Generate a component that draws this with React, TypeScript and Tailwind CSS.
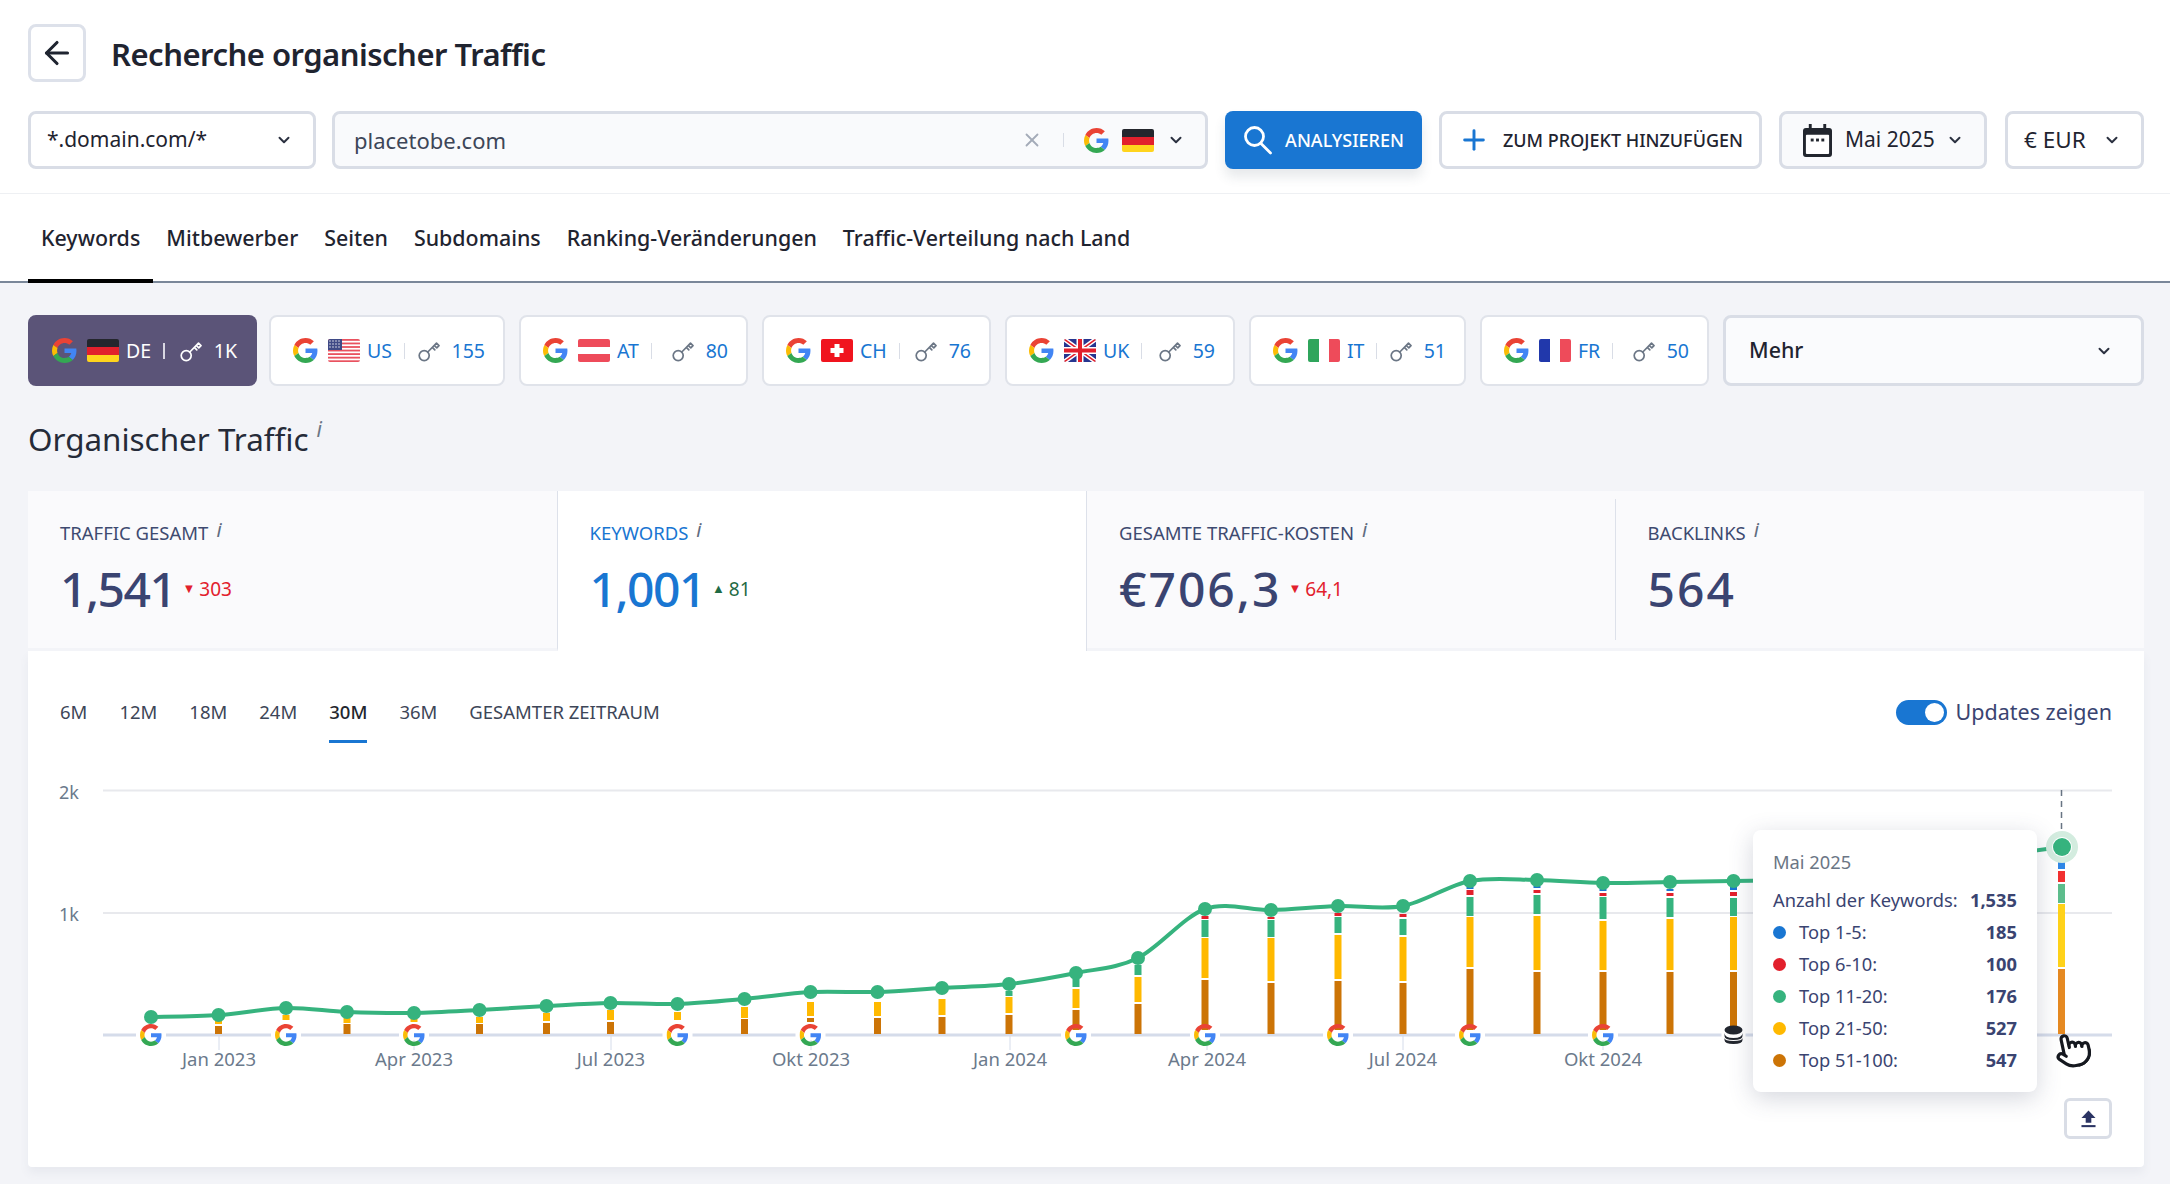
import React from "react";
import { ArrowLeft, ChevronDown, Plus, X, Pointer } from "lucide-react";

const GPaths = () => (
  <>
    <path fill="#EA4335" d="M24 9.5c3.54 0 6.71 1.22 9.21 3.6l6.85-6.85C35.9 2.38 30.47 0 24 0 14.62 0 6.51 5.38 2.56 13.22l7.98 6.19C12.43 13.72 17.74 9.5 24 9.5z" />
    <path fill="#4285F4" d="M46.98 24.55c0-1.57-.15-3.09-.38-4.55H24v9.02h12.94c-.58 2.96-2.26 5.48-4.78 7.18l7.73 6c4.51-4.18 7.09-10.36 7.09-17.65z" />
    <path fill="#FBBC05" d="M10.53 28.59c-.48-1.45-.76-2.99-.76-4.59s.27-3.14.76-4.59l-7.98-6.19C.92 16.46 0 20.12 0 24c0 3.88.92 7.54 2.56 10.78l7.97-6.19z" />
    <path fill="#34A853" d="M24 48c6.48 0 11.93-2.13 15.89-5.81l-7.73-6c-2.15 1.45-4.92 2.3-8.16 2.3-6.26 0-11.57-4.22-13.47-9.91l-7.98 6.19C6.51 42.62 14.62 48 24 48z" />
  </>
);

const G = ({ className = "w-[25px] h-[25px]" }: { className?: string }) => (
  <svg viewBox="0 0 48 48" className={className + " shrink-0"}>
    <GPaths />
  </svg>
);

const Flag = ({ code }: { code: string }) => {
  const body: Record<string, React.ReactNode> = {
    DE: (
      <>
        <rect width="32" height="8" fill="#24262d" />
        <rect y="8" width="32" height="8" fill="#e2202c" />
        <rect y="16" width="32" height="7" fill="#ffd41d" />
      </>
    ),
    US: (
      <>
        <rect width="32" height="23" fill="#fff" />
        {[0, 1, 2, 3, 4, 5, 6].map((i) => (
          <rect key={i} y={i * 3.55} width="32" height="1.8" fill="#e9525f" />
        ))}
        <rect width="14" height="11" fill="#3f4a86" />
        {[2, 5, 8].map((y) =>
          [2, 5, 8, 11].map((x) => <circle key={x + "-" + y} cx={x} cy={y} r="0.7" fill="#fff" />)
        )}
      </>
    ),
    AT: (
      <>
        <rect width="32" height="23" fill="#fff" />
        <rect width="32" height="8" fill="#ee4b5a" />
        <rect y="15" width="32" height="8" fill="#ee4b5a" />
      </>
    ),
    CH: (
      <>
        <rect width="32" height="23" fill="#f0141e" />
        <rect x="13.5" y="5" width="5" height="13" fill="#fff" />
        <rect x="9.5" y="9" width="13" height="5" fill="#fff" />
      </>
    ),
    UK: (
      <>
        <rect width="32" height="23" fill="#27358f" />
        <path d="M0 0L32 23M32 0L0 23" stroke="#fff" strokeWidth="4.5" />
        <path d="M0 0L32 23M32 0L0 23" stroke="#e2202c" strokeWidth="1.5" />
        <path d="M16 0V23M0 11.5H32" stroke="#fff" strokeWidth="7" />
        <path d="M16 0V23M0 11.5H32" stroke="#e2202c" strokeWidth="4" />
      </>
    ),
    IT: (
      <>
        <rect width="11" height="23" fill="#2fa55c" />
        <rect x="11" width="10" height="23" fill="#fff" />
        <rect x="21" width="11" height="23" fill="#ee4b5a" />
      </>
    ),
    FR: (
      <>
        <rect width="11" height="23" fill="#2138ab" />
        <rect x="11" width="10" height="23" fill="#fff" />
        <rect x="21" width="11" height="23" fill="#ee4b5a" />
      </>
    ),
  };
  return (
    <svg viewBox="0 0 32 23" className="w-[32px] h-[23px] shrink-0 rounded-[2px]">
      {body[code]}
    </svg>
  );
};

const KeyIcon = ({ color }: { color: string }) => (
  <svg viewBox="0 0 22 22" className="w-[22px] h-[22px] shrink-0" fill="none" stroke={color} strokeWidth="1.7" strokeLinecap="round" strokeLinejoin="round">
    <circle cx="6.2" cy="15.6" r="5" />
    <path d="M9.8 12L18.5 3.2L21 5.6L18.8 7.8L17 6.2M14.4 7.4L16.8 9.8" />
  </svg>
);

const chips = [
  { code: "US", n: "155", w: "w-[236px]" },
  { code: "AT", n: "80", w: "w-[229px]" },
  { code: "CH", n: "76", w: "w-[229px]" },
  { code: "UK", n: "59", w: "w-[230px]" },
  { code: "IT", n: "51", w: "w-[217px]" },
  { code: "FR", n: "50", w: "w-[229px]" },
];

const Chev = ({ className = "" }: { className?: string }) => (
  <ChevronDown size={18} strokeWidth={2.6} className={"text-[#2b3140] shrink-0 " + className} />
);

const stats = [
  { label: "TRAFFIC GESAMT", value: "1,541", delta: "303", dir: "down", track: "tracking-[-1.5px]" },
  { label: "KEYWORDS", value: "1,001", delta: "81", dir: "up", active: true, track: "tracking-[-1.5px]" },
  { label: "GESAMTE TRAFFIC-KOSTEN", value: "€706,3", delta: "64,1", dir: "down", track: "tracking-[2px]" },
  { label: "BACKLINKS", value: "564", track: "tracking-[2px]" },
];

const O = "#cc7406", Y = "#ffb900", GR = "#36b37e", R = "#e2202c", B = "#1976d2";
type Seg = [string, number, number];
const o = (t: number, b = 1034): Seg => [O, t, b];
const y = (t: number, b: number): Seg => [Y, t, b];
const g = (t: number, b: number): Seg => [GR, t, b];
const r = (t: number, b: number): Seg => [R, t, b];
const bl = (t: number, b: number): Seg => [B, t, b];

const pts: { x: number; y: number; segs: Seg[]; mark?: string }[] = [
  { x: 151, y: 1017, segs: [], mark: "g" },
  { x: 218.5, y: 1015, segs: [o(1026), y(1021, 1024)] },
  { x: 286, y: 1008, segs: [y(1015, 1020)], mark: "g" },
  { x: 347, y: 1012, segs: [o(1024), y(1018, 1023)] },
  { x: 414, y: 1013, segs: [y(1019, 1022)], mark: "g" },
  { x: 479.5, y: 1010, segs: [o(1024), y(1017, 1023)] },
  { x: 546.5, y: 1006, segs: [o(1023), y(1013, 1021)] },
  { x: 610.5, y: 1003, segs: [o(1022), y(1010, 1020)] },
  { x: 677.5, y: 1004, segs: [y(1012, 1020)], mark: "g" },
  { x: 744.5, y: 999, segs: [o(1019), y(1007, 1018)] },
  { x: 810.5, y: 992, segs: [o(1018, 1022), y(1002, 1016)], mark: "g" },
  { x: 877.5, y: 992, segs: [o(1018), y(1002, 1016)] },
  { x: 942, y: 988, segs: [o(1017), y(999, 1015)] },
  { x: 1009, y: 984, segs: [o(1015), y(997, 1013), g(991, 996)] },
  { x: 1076, y: 973, segs: [o(1010), y(989, 1008), g(979, 987)], mark: "g" },
  { x: 1138, y: 958, segs: [o(1004), y(977, 1002), g(965, 975)] },
  { x: 1205, y: 909, segs: [o(980), y(938, 978), g(920, 937), r(916, 919)], mark: "g" },
  { x: 1271, y: 910, segs: [o(983), y(938, 981), g(920, 937), r(917, 919)] },
  { x: 1338, y: 906, segs: [o(981), y(935, 979), g(917, 933), r(913, 916)], mark: "g" },
  { x: 1403, y: 906, segs: [o(983), y(937, 981), g(919, 935), r(914, 917)] },
  { x: 1470, y: 881, segs: [o(969), y(917, 967), g(897, 916), r(890, 895), bl(887, 889)], mark: "g" },
  { x: 1537, y: 880, segs: [o(972), y(916, 970), g(895, 914), r(890, 893), bl(886, 888)] },
  { x: 1603, y: 883, segs: [o(972), y(921, 970), g(897, 919), r(893, 896), bl(889, 891)], mark: "g" },
  { x: 1670, y: 882, segs: [o(972), y(919, 970), g(898, 917), r(893, 896), bl(889, 891)] },
  { x: 1733.5, y: 881, segs: [o(972, 1026), y(917, 970), g(898, 916), r(892, 896), bl(887, 890)], mark: "db" },
  { x: 1800, y: 880, segs: [] },
  { x: 1866, y: 878, segs: [] },
  { x: 1928, y: 866, segs: [] },
  { x: 1995, y: 856, segs: [] },
  { x: 2061.5, y: 847, segs: [] },
];

function smooth(p: { x: number; y: number }[]) {
  let d = `M${p[0].x} ${p[0].y}`;
  for (let i = 0; i < p.length - 1; i++) {
    const p0 = p[i - 1] || p[i];
    const p1 = p[i];
    const p2 = p[i + 1];
    const p3 = p[i + 2] || p2;
    const t = 0.16;
    d += ` C${p1.x + (p2.x - p0.x) * t} ${p1.y + (p2.y - p0.y) * t} ${p2.x - (p3.x - p1.x) * t} ${p2.y - (p3.y - p1.y) * t} ${p2.x} ${p2.y}`;
  }
  return d;
}

const xLabels: [number, string][] = [
  [219, "Jan 2023"],
  [414, "Apr 2023"],
  [611, "Jul 2023"],
  [811, "Okt 2023"],
  [1010, "Jan 2024"],
  [1207, "Apr 2024"],
  [1403, "Jul 2024"],
  [1603, "Okt 2024"],
];

const Chart = () => (
  <svg viewBox="28 760 2116 407" className="block w-[2116px] h-[407px]" style={{ fontFamily: "'Noto Sans', sans-serif" }}>
    <line x1="103" x2="2112" y1="790.5" y2="790.5" stroke="#e8e9ed" strokeWidth="2" />
    <line x1="103" x2="2112" y1="913" y2="913" stroke="#e8e9ed" strokeWidth="2" />
    <line x1="103" x2="2112" y1="1035" y2="1035" stroke="#d5dcea" strokeWidth="3" />
    <text x="79" y="799" textAnchor="end" fontSize="18" fill="#6b7a8c">2k</text>
    <text x="79" y="921" textAnchor="end" fontSize="18" fill="#6b7a8c">1k</text>
    {xLabels.map(([x, t]) => (
      <g key={t}>
        <line x1={x} x2={x} y1="1036" y2="1050" stroke="#d5dcea" strokeWidth="1" />
        <text x={x} y="1066" textAnchor="middle" fontSize="18.5" fill="#6b7a8c">{t}</text>
      </g>
    ))}
    {pts.map((p) =>
      p.segs.map(([c, t, b]) => <rect key={p.x + c + t} x={p.x - 3.5} y={t} width="7" height={b - t} fill={c} />)
    )}
    <rect x="2058" y="969" width="7" height="65" fill="#e68a22" />
    <rect x="2058" y="904" width="7" height="63" fill="#ffd21a" />
    <rect x="2058" y="884" width="7" height="19" fill="#5dbd8c" />
    <rect x="2058" y="871" width="7" height="11" fill="#f23030" />
    <rect x="2058" y="858" width="7" height="11" fill="#2f86e6" />
    <path d={smooth(pts)} fill="none" stroke={GR} strokeWidth="4" />
    {pts.slice(0, 25).map((p) => (
      <circle key={p.x} cx={p.x} cy={p.y} r="7" fill={GR} />
    ))}
    <line x1="2061.5" x2="2061.5" y1="790" y2="832" stroke="#687483" strokeWidth="1.5" strokeDasharray="6 5" />
    <circle cx="2062" cy="847" r="16" fill="#d3ecdf" />
    <circle cx="2062" cy="847" r="10" fill="#fff" />
    <circle cx="2062" cy="847" r="9" fill={GR} />
    {pts.map((p) =>
      p.mark === "g" ? (
        <g key={"m" + p.x}>
          <rect x={p.x - 15} y="1030" width="30" height="10" fill="#fff" />
          <svg x={p.x - 11} y="1024" width="22" height="22" viewBox="0 0 48 48">
            <GPaths />
          </svg>
        </g>
      ) : p.mark === "db" ? (
        <g key={"m" + p.x}>
          <rect x={p.x - 12} y="1030" width="24" height="10" fill="#fff" />
          <ellipse cx={p.x} cy="1030" rx="9" ry="4.5" fill="#22262e" />
          <path d={`M${p.x - 9} 1033 Q${p.x - 9} 1038 ${p.x} 1038 Q${p.x + 9} 1038 ${p.x + 9} 1033 V1036 Q${p.x + 9} 1040 ${p.x} 1040 Q${p.x - 9} 1040 ${p.x - 9} 1036 Z`} fill="#22262e" />
          <path d={`M${p.x - 9} 1038 Q${p.x - 9} 1041 ${p.x} 1041 Q${p.x + 9} 1041 ${p.x + 9} 1038 V1040 Q${p.x + 9} 1044 ${p.x} 1044 Q${p.x - 9} 1044 ${p.x - 9} 1040 Z`} fill="#22262e" />
        </g>
      ) : null
    )}
  </svg>
);

const rows: [string, string, string][] = [
  ["Top 1-5:", "185", "bg-[#1976d2]"],
  ["Top 6-10:", "100", "bg-[#e2202c]"],
  ["Top 11-20:", "176", "bg-[#36b37e]"],
  ["Top 21-50:", "527", "bg-[#ffb900]"],
  ["Top 51-100:", "547", "bg-[#cc7406]"],
];

export default function App() {
  return (
    <div className="w-[2170px] h-[1184px] overflow-hidden bg-[#f3f4f8] text-[#1f2430] font-['Noto_Sans',sans-serif]">
      <div className="bg-white h-[194px] px-[28px] pt-[24px] border-b border-[#eef0f3]">
        <div className="flex items-center gap-[25px]">
          <button className="w-[58px] h-[58px] rounded-[8px] border-[3px] border-[#dde1ea] flex items-center justify-center text-[#1f2430]">
            <ArrowLeft size={36} strokeWidth={2.1} />
          </button>
          <h1 className="text-[31px] font-semibold tracking-[-0.5px] mt-[2px]">Recherche organischer Traffic</h1>
        </div>
        <div className="flex mt-[29px] h-[58px] text-[21px] w-[2116px]">
          <div className="w-[288px] shrink-0 rounded-[8px] border-[3px] border-[#d9dde6] flex items-center justify-between pl-[16px] pr-[20px]">
            <span>*.domain.com/*</span>
            <Chev />
          </div>
          <div className="ml-[16px] w-[876px] shrink-0 rounded-[8px] border-[3px] border-[#d9dde6] bg-[#f9fafc] flex items-center pl-[19px] pr-[20px]">
            <span className="flex-1 text-[#3d4658] text-[22px]">placetobe.com</span>
            <X size={22} strokeWidth={2} className="text-[#a4abb8]" />
            <span className="w-[1px] h-[14px] bg-[#d9dde6] ml-[20px] mr-[20px]" />
            <G className="w-[25px] h-[25px]" />
            <span className="ml-[13px]"><Flag code="DE" /></span>
            <Chev className="ml-[13px]" />
          </div>
          <button className="ml-[17px] w-[197px] shrink-0 rounded-[8px] bg-[#1976d2] text-white flex items-center justify-center gap-[12px] text-[18px] font-medium shadow-[0_8px_12px_rgba(60,70,90,0.12)]">
            <svg viewBox="0 0 30 30" className="w-[30px] h-[30px] shrink-0" fill="none" stroke="#fff" strokeWidth="2.8" strokeLinecap="round">
              <circle cx="11.5" cy="11.5" r="9" />
              <path d="M18 18.5L27.5 28" />
            </svg>
            <span>ANALYSIEREN</span>
          </button>
          <button className="ml-[17px] w-[323px] shrink-0 rounded-[8px] border-[3px] border-[#d9dde6] flex items-center justify-center gap-[13px] text-[18px] font-medium">
            <Plus size={32} strokeWidth={2.2} className="text-[#1976d2]" />
            <span>ZUM PROJEKT HINZUFÜGEN</span>
          </button>
          <button className="ml-[17px] w-[208px] shrink-0 rounded-[8px] border-[3px] border-[#d9dde6] bg-[#f9fafc] flex items-center justify-between pl-[21px] pr-[20px]">
            <svg viewBox="0 0 30 34" className="w-[29px] h-[33px] shrink-0">
              <path fill="#22262e" d="M6 0h3v4h12V0h3v4h3a3 3 0 0 1 3 3v24a3 3 0 0 1-3 3H3a3 3 0 0 1-3-3V7a3 3 0 0 1 3-3h3z" />
              <rect x="3" y="11" width="24" height="20" rx="1" fill="#fff" />
              <rect x="8" y="15" width="3" height="3" fill="#22262e" />
              <rect x="13.5" y="15" width="3" height="3" fill="#22262e" />
              <rect x="19" y="15" width="3" height="3" fill="#22262e" />
            </svg>
            <span className="ml-[13px] flex-1 text-left">Mai 2025</span>
            <Chev />
          </button>
          <button className="ml-[18px] w-[139px] shrink-0 rounded-[8px] border-[3px] border-[#d9dde6] flex items-center justify-between pl-[16px] pr-[20px] text-[22.5px]">
            <span>€ EUR</span>
            <Chev />
          </button>
        </div>
      </div>

      <div className="bg-white h-[89px] border-b-2 border-[#7a8799] px-[28px] flex items-stretch text-[21.4px] font-medium">
        {["Keywords", "Mitbewerber", "Seiten", "Subdomains", "Ranking-Veränderungen", "Traffic-Verteilung nach Land"].map((t, i) => (
          <div key={t} className={"px-[13px] flex items-center -mb-[2px] border-b-[4px] pt-[3px] " + (i === 0 ? "border-black" : "border-transparent")}>
            {t}
          </div>
        ))}
      </div>

      <div className="pl-[28px] pt-[32px] w-[2144px]">
        <div className="flex h-[71px] gap-[14px] text-[19.5px]">
          <div className="w-[229px] -mr-[2px] rounded-[8px] bg-[#5b5478] text-white flex items-center pl-[24px] pr-[20px]">
            <G />
            <span className="ml-[10px]"><Flag code="DE" /></span>
            <span className="ml-[7px]">DE</span>
            <span className="w-[2px] h-[16px] bg-[#d9d7e2] ml-[12px]" />
            <span className="ml-auto"><KeyIcon color="#fff" /></span>
            <span className="ml-[12px]">1K</span>
          </div>
          {chips.map((c) => (
            <div key={c.code} className={c.w + " rounded-[8px] bg-white border-2 border-[#e0e3ea] flex items-center pl-[22px] pr-[18px] text-[#1976d2]"}>
              <G />
              <span className="ml-[10px]"><Flag code={c.code} /></span>
              <span className="ml-[7px]">{c.code}</span>
              <span className="w-[1px] h-[16px] bg-[#d9dde6] ml-[12px]" />
              <span className="ml-auto"><KeyIcon color="#6b7685" /></span>
              <span className="ml-[12px]">{c.n}</span>
            </div>
          ))}
          <div className="flex-1 rounded-[8px] border-[3px] border-[#d9dde6] bg-[#fafbfd] flex items-center justify-between pl-[23px] pr-[28px] text-[21.4px] font-medium">
            <span>Mehr</span>
            <Chev />
          </div>
        </div>

        <div className="mt-[33px] h-[72px] text-[31.4px] leading-[40px] text-[#252b38] flex items-start">
          <span>Organischer Traffic</span>
          <i className="text-[21px] leading-[20px] ml-[8px] text-[#6b7685]">i</i>
        </div>

        <div className="w-[2116px]">
          <div className="flex h-[160px]">
            {stats.map((s, i) => (
              <div
                key={s.label}
                className={
                  "flex-1 pl-[32px] pt-[30px] relative " +
                  (s.active ? "bg-white" : "bg-[#fafafc] border-b-[3px] border-[#f3f4f8] ") +
                  (i === 0 ? " border-r border-r-[#dde1ea]" : "") +
                  (i === 1 ? " border-r border-r-[#dde1ea]" : "")
                }
              >
                {i === 2 && <span className="absolute right-0 top-[8px] h-[141px] w-[1px] bg-[#dde1ea]" />}
                <div className={"flex items-start text-[18.5px] leading-[24px] " + (s.active ? "text-[#1976d2]" : "text-[#3e4a70]")}>
                  <span>{s.label}</span>
                  <i className="text-[20px] leading-[18px] ml-[8px] text-[#5f6c80]">i</i>
                </div>
                <div className="flex items-center mt-[15px]">
                  <span className={"text-[48px] leading-[58px] font-medium " + s.track + " " + (s.active ? "text-[#1976d2]" : "text-[#3a4471]")}>{s.value}</span>
                  {s.delta && (
                    <span className={"flex items-center ml-[7px] text-[19px] " + (s.dir === "up" ? "text-[#1f6b45]" : "text-[#e2202c]")}>
                      <span className="text-[13px] mr-[4px]">{s.dir === "up" ? "▲" : "▼"}</span>
                      {s.delta}
                    </span>
                  )}
                </div>
              </div>
            ))}
          </div>

          <div className="bg-white h-[516px] shadow-[0_6px_10px_rgba(90,100,130,0.07)] rounded-b-[4px]">
            <div className="h-[109px] flex items-start justify-between px-[32px]">
              <div className="flex gap-[32px] text-[18.5px] text-[#3d4658] pt-[49px]">
                {["6M", "12M", "18M", "24M", "30M", "36M", "GESAMTER ZEITRAUM"].map((t) => (
                  <div key={t} className={"relative leading-[24px] " + (t === "30M" ? "text-[#22262e] font-medium" : "")}>
                    {t}
                    {t === "30M" && <span className="absolute left-0 right-0 top-[40px] h-[3px] bg-[#1976d2]" />}
                  </div>
                ))}
              </div>
              <div className="flex items-center pt-[48px] gap-[9px]">
                <span className="w-[51px] h-[25px] rounded-full bg-[#1976d2] relative">
                  <span className="absolute right-[3px] top-[3px] w-[19px] h-[19px] rounded-full bg-white" />
                </span>
                <span className="text-[21.5px] leading-[26px] text-[#3a4471]">Updates zeigen</span>
              </div>
            </div>
            <div className="relative h-[407px]">
              <Chart />
              <div className="absolute left-[1725px] top-[70px] w-[284px] h-[262px] rounded-[8px] bg-white shadow-[0_6px_24px_rgba(60,70,100,0.22)] px-[20px] pt-[20px] text-[18.3px] text-[#3a4471]">
                <div className="leading-[24px] text-[#6b7685]">Mai 2025</div>
                <div className="flex justify-between mt-[14px] leading-[24px]">
                  <span>Anzahl der Keywords:</span>
                  <b className="font-bold">1,535</b>
                </div>
                {rows.map(([l, v, c]) => (
                  <div key={l} className="flex items-center mt-[8px] leading-[24px]">
                    <span className={"w-[13px] h-[13px] rounded-full " + c} />
                    <span className="ml-[13px] flex-1">{l}</span>
                    <b className="font-bold">{v}</b>
                  </div>
                ))}
              </div>
              <Pointer size={38} strokeWidth={2} fill="#fff" className="absolute left-[2026px] top-[271px] text-[#15181f] -rotate-12" />
              <button className="absolute right-[32px] bottom-[28px] w-[48px] h-[41px] rounded-[6px] border-[3px] border-[#d9dde6] bg-white flex items-center justify-center">
                <svg viewBox="0 0 16 18" className="w-[15px] h-[18px]" fill="#2b3463">
                  <path d="M8 0L15.5 8H11V13H5V8H0.5Z" />
                  <rect x="0.5" y="15.5" width="15" height="2.2" />
                </svg>
              </button>
            </div>
          </div>
        </div>
      </div>
    </div>
  );
}
